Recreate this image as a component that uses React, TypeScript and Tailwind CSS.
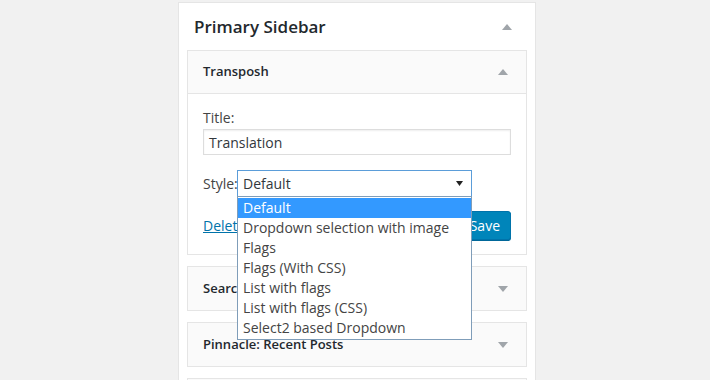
import React from "react";

const Up = () => (
  <svg width="10" height="6" viewBox="0 0 10 6"><path d="M5 0L10 6H0z" fill="#a0a5aa" /></svg>
);
const Down = () => (
  <svg width="10" height="6" viewBox="0 0 10 6"><path d="M0 0H10L5 6z" fill="#a0a5aa" /></svg>
);

const items = [
  "Default",
  "Dropdown selection with image",
  "Flags",
  "Flags (With CSS)",
  "List with flags",
  "List with flags (CSS)",
  "Select2 based Dropdown",
];

function Collapsed({ title }: { title: string }) {
  return (
    <div className="h-[45px] border border-[#e5e5e5] bg-[#fafafa] flex items-center justify-between pl-[15px] pr-[18px]">
      <span className="text-[13px] font-semibold text-[#23282d]">{title}</span>
      <Down />
    </div>
  );
}

export default function App() {
  return (
    <div
      className="w-[710px] h-[380px] bg-[#f1f1f1] overflow-hidden pl-[178px] pt-[2px]"
      style={{ fontFamily: '"Open Sans", "Noto Sans", sans-serif' }}
    >
      <div className="w-[358px] h-[400px] bg-white border border-[#e5e5e5]">
        <div className="h-[47px] flex items-center justify-between pl-[15px] pr-[23px]">
          <span className="text-[17px] font-semibold text-[#23282d]">Primary Sidebar</span>
          <Up />
        </div>
        <div className="px-[8px] flex flex-col gap-[11px]">
          <div className="border border-[#e5e5e5] bg-white">
            <div className="h-[43px] bg-[#fafafa] border-b border-[#e5e5e5] flex items-center justify-between pl-[15px] pr-[18px]">
              <span className="text-[13px] font-semibold text-[#23282d]">Transposh</span>
              <Up />
            </div>
            <div className="px-[15px] pt-[14px] pb-[14px] text-[#444] relative">
              <div className="text-[14px] leading-[19px]">Title:</div>
              <div className="mt-[2px] h-[26px] w-[308px] border border-[#ddd] flex items-center px-[5px] text-[14px] text-[#32373c] shadow-[inset_0_1px_2px_rgba(0,0,0,0.07)]">
                Translation
              </div>
              <div className="mt-[15px] flex items-center gap-[2px] text-[14px]">
                <span className="w-[32px]">Style:</span>
                <div className="relative">
                  <div className="h-[27px] w-[235px] border border-[#5b9dd9] flex items-center justify-between pl-[5px] pr-[8px] text-[#32373c]">
                    <span>Default</span>
                    <svg width="7" height="5" viewBox="0 0 7 5"><path d="M0 0H7L3.5 5z" fill="#222" /></svg>
                  </div>
                  <div className="absolute left-0 top-[26px] w-[235px] z-10 bg-white border border-[#7f9db9] py-[1px]">
                    {items.map((it, i) => (
                      <div
                        key={it}
                        className={
                          "h-[20px] leading-[20px] pl-[5px] text-[14px] " +
                          (i === 0 ? "bg-[#3399ff] text-white" : "text-[#444]")
                        }
                      >
                        {it}
                      </div>
                    ))}
                  </div>
                </div>
              </div>
              <div className="mt-[14px] flex items-center justify-between h-[29px]">
                <span className="text-[14px] text-[#0073aa] underline">Delete</span>
                <button className="h-[29px] px-[10px] bg-[#0085ba] border border-[#0073aa] rounded-[3px] text-white text-[14px] shadow-[0_1px_0_#006799]">
                  Save
                </button>
              </div>
            </div>
          </div>
          <Collapsed title="Search" />
          <Collapsed title="Pinnacle: Recent Posts" />
          <div className="h-[45px] border border-[#e5e5e5] bg-[#fafafa]" />
        </div>
      </div>
    </div>
  );
}
